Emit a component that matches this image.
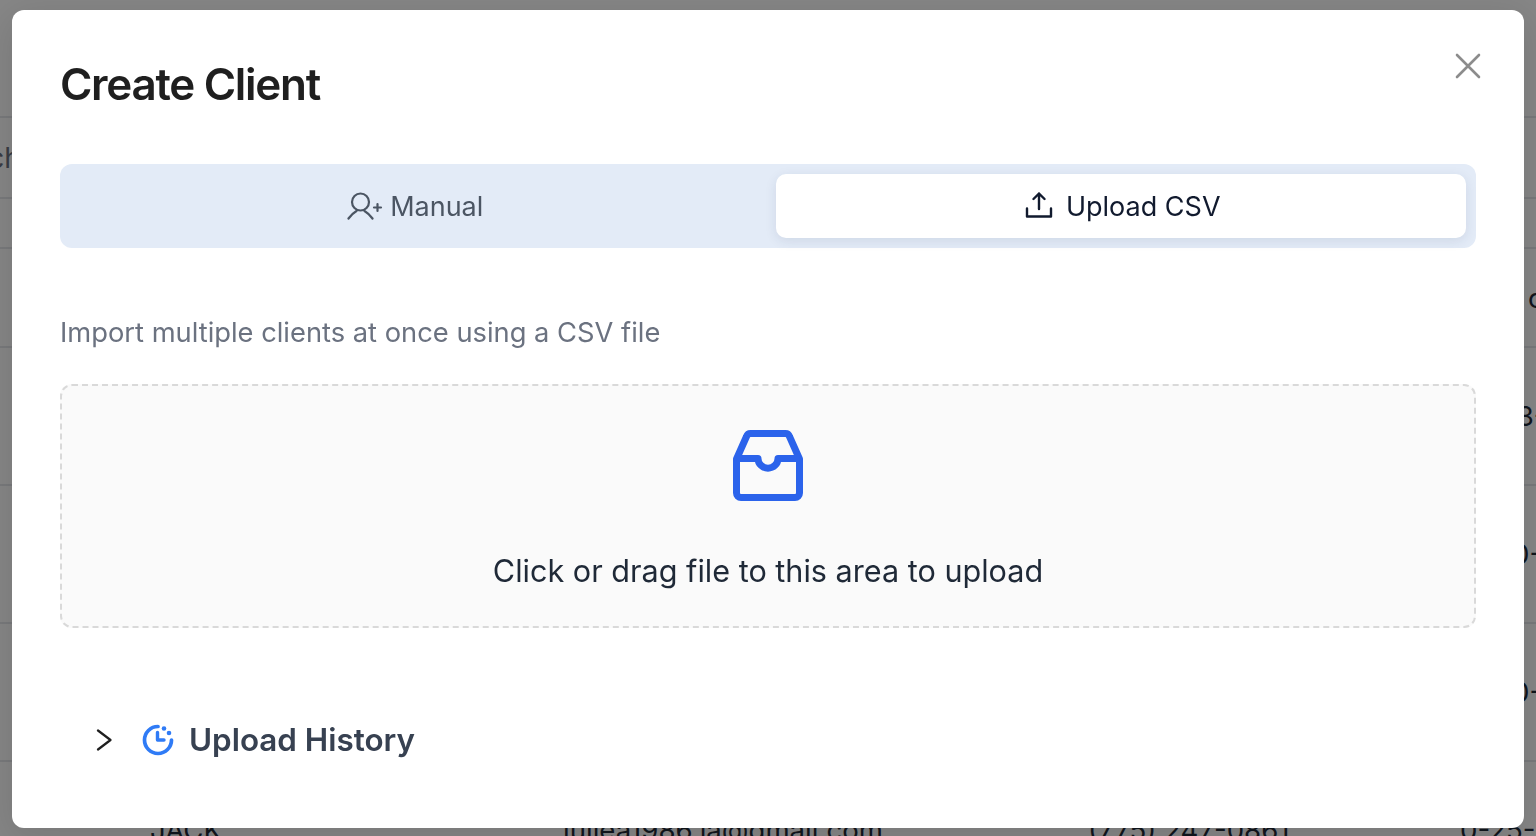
<div class="page">
  <div class="top"></div>
  <div class="search"><span class="search-text">Search</span></div>
  <div class="head"></div>
  <div class="row row-short"><span class="name"></span><span class="email"></span><span class="phone"></span><span class="date">Date c</span></div>
  <div class="row"><span class="name"></span><span class="email"></span><span class="phone"></span><span class="date">12-23-1989</span></div>
  <div class="row"><span class="name"></span><span class="email"></span><span class="phone"></span><span class="date">12-10-1988</span></div>
  <div class="row"><span class="name"></span><span class="email"></span><span class="phone"></span><span class="date">12-10-1990</span></div>
  <div class="row"><span class="name">JACK</span><span class="email">juliea1986.la@gmail.com</span><span class="phone">(775) 247-0861</span><span class="date">0-25-1986</span></div>
</div>

<div class="mask"></div>

<div class="modal" role="dialog" aria-label="Create Client">
  <button class="close" aria-label="Close">
    <svg width="28" height="28" viewBox="0 0 28 28" fill="none" stroke="currentColor" stroke-width="2.6" stroke-linecap="round"><path d="M3 3 25 25M25 3 3 25" /></svg>
  </button>

  <h1>Create Client</h1>

  <div class="tabs">
    <div class="tab">
      <svg width="36" height="28" viewBox="0 0 36 28" fill="none" stroke="currentColor" stroke-width="2.2" stroke-linecap="round">
        <circle cx="13.5" cy="10" r="8.500" />
        <path d="M1.500 26.500C4 23 7 20.500 9.500 19M25.500 26.500C23 23 20 20.500 17.500 19" />
        <path d="M27 15.500h7M30.500 12v7" />
      </svg>
      <span>Manual</span>
    </div>
    <div class="tab active">
      <svg width="28" height="28" viewBox="0 0 28 28" fill="none" stroke="currentColor" stroke-width="2.4" stroke-linecap="round" stroke-linejoin="round">
        <path d="M14 17V1.500M8.500 7 14 1.500 19.500 7" />
        <path d="M2 16.500V24.500H26V16.500" />
      </svg>
      <span>Upload CSV</span>
    </div>
  </div>

  <p class="hint">Import multiple clients at once using a CSV file</p>

  <div class="drop">
    <svg class="inbox" width="70" height="71" viewBox="0 0 70 71" fill="none" stroke="currentColor" stroke-width="7" stroke-linejoin="round">
      <path d="M3.500 29 13.500 6.500Q14.600 3.500 17.500 3.500H52.500Q55.400 3.500 56.500 6.500L66.500 29V63a4.500 4.500 0 0 1-4.500 4.500H8a4.500 4.500 0 0 1-4.500-4.500Z" />
      <path d="M3.500 28.500H25a10 9.700 0 0 0 20 0H66.500" />
    </svg>
    <p class="drop-text">Click or drag file to this area to upload</p>
  </div>

  <div class="history">
    <svg class="chev" width="16" height="22" viewBox="0 0 16 22" fill="none" stroke="currentColor" stroke-width="2.200" stroke-linecap="round" stroke-linejoin="round"><path d="M2 1.500 14.500 11 2 20.500" /></svg>
    <svg class="clock" width="32" height="32" viewBox="0 0 32 32" fill="none">
      <path d="M16 2.500A13.500 13.500 0 1 0 29.500 16" stroke="currentColor" stroke-width="3.700" stroke-linecap="round" />
      <path d="M15.500 8.500V16H22" stroke="currentColor" stroke-width="3.400" stroke-linecap="round" stroke-linejoin="round" />
      <circle cx="22" cy="4.500" r="2.300" fill="currentColor" />
      <circle cx="27" cy="9" r="2.300" fill="currentColor" />
    </svg>
    <span>Upload History</span>
  </div>
</div>

<style>
  :global(body) {
    margin: 0;
    background: #fff;
    overflow: hidden;
    font-family: Inter, "Liberation Sans", sans-serif;
  }

  .page {
    height: 836px;
    overflow: hidden;
    color: #1f2937;
    font-size: 27.600px;
  }
  .top { height: 118px; border-bottom: 2px solid #e5e7eb; box-sizing: border-box; }
  .search {
    height: 81px;
    border-bottom: 2px solid #e5e7eb;
    box-sizing: border-box;
    display: flex;
    align-items: center;
    overflow: hidden;
  }
  .search-text { margin-left: -72px; color: #6b7280; font-size: 28px; }
  .head { height: 50px; border-bottom: 2px solid #e5e7eb; box-sizing: border-box; }
  .row {
    height: 138px;
    border-bottom: 2px solid #e5e7eb;
    box-sizing: border-box;
    display: grid;
    grid-template-columns: 563px 525px 372px 1fr;
    align-items: center;
    white-space: nowrap;
    overflow: hidden;
  }
  .row-short { height: 99px; }
  .name { padding-left: 150px; }

  .mask {
    position: fixed;
    inset: 0;
    background: rgba(0, 0, 0, 0.47);
  }

  .modal {
    position: fixed;
    left: 12px;
    top: 10px;
    width: 1512px;
    height: 818px;
    box-sizing: border-box;
    padding: 46px 48px 0;
    background: #fff;
    border-radius: 12px;
    box-shadow: 0 9px 42px 12px rgba(0, 0, 0, 0.1);
    color: #1f1f1f;
  }

  .close {
    position: absolute;
    right: 42px;
    top: 42px;
    width: 28px;
    height: 28px;
    padding: 0;
    border: 0;
    background: none;
    color: #8c8c8c;
    display: flex;
  }

  h1 {
    margin: 0 0 51px;
    font-size: 44px;
    line-height: 57px;
    font-weight: 600;
    letter-spacing: -1.3px;
    color: #1f1f1f;
  }

  .tabs {
    display: grid;
    grid-template-columns: 1fr 1fr;
    column-gap: 15px;
    padding: 10px;
    height: 84px;
    box-sizing: border-box;
    background: #e3ebf7;
    border-radius: 12px;
  }
  .tab {
    display: flex;
    align-items: center;
    justify-content: center;
    gap: 7px;
    font-size: 27px;
    color: #4b5563;
    border-radius: 10px;
  }
  .tab.active {
    background: #fff;
    color: #111a2e;
    gap: 13px;
    padding-left: 4px;
    box-shadow: 0 3px 12px rgba(30, 50, 90, 0.1);
  }

  .hint {
    margin: 67px 0 33px;
    font-size: 27.300px;
    line-height: 36px;
    color: #6b7280;
  }

  .drop {
    height: 244px;
    box-sizing: border-box;
    padding-top: 44px;
    background: #fafafa;
    border: 2px dashed #d9d9d9;
    border-radius: 12px;
    display: flex;
    flex-direction: column;
    align-items: center;
  }
  .inbox { color: #2b63eb; display: block; }
  .drop-text {
    margin: 48px 0 0;
    font-size: 30.600px;
    line-height: 44px;
    color: #1f2937;
  }

  .history {
    margin-top: 93px;
    padding-left: 36px;
    display: flex;
    align-items: center;
    height: 38px;
    line-height: 40px;
    font-size: 31.400px;
    font-weight: 600;
    color: #374151;
  }
  .chev { color: #1f1f1f; margin-right: 30px; }
  .clock { color: #2f7bf6; margin-right: 15px; }
</style>
